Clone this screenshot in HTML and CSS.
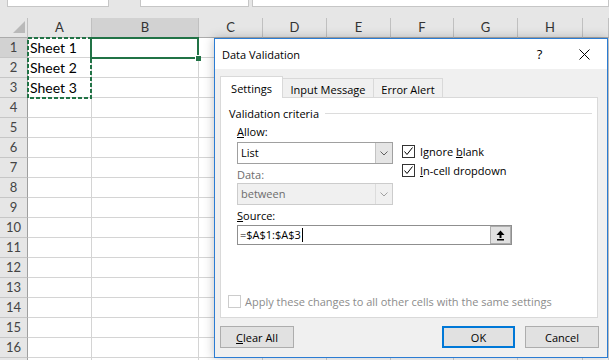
FILE: index.html
```html
<!DOCTYPE html>
<html>
<head>
    <title>Data Validation</title>
    <link rel="stylesheet" href="styles.css">
</head>
<body>
    <div class="toolbar">
        <div class="field name-box"></div>
        <div class="field formula-left"></div>
        <div class="field formula-bar"></div>
    </div>
    <div class="sheet">
        <div class="grid" id="grid">
            <div class="corner">
                <svg width="28" height="20" viewBox="0 0 28 20"><polygon points="25,3 25,15 13,15" fill="#b9b9b9"/></svg>
            </div>
            <div class="col-head">A</div>
            <div class="col-head selected">B</div>
            <div class="col-head">C</div>
            <div class="col-head">D</div>
            <div class="col-head">E</div>
            <div class="col-head">F</div>
            <div class="col-head">G</div>
            <div class="col-head">H</div>
            <div class="col-head"></div>
        </div>
        <!-- copy marquee round A1:A3 -->
        <svg class="marquee" width="65" height="62" viewBox="0 0 65 62">
            <rect x="1" y="1" width="63" height="60" fill="none" stroke="#217346" stroke-width="2" stroke-dasharray="4 2"/>
        </svg>
        <div class="active-cell"><span class="fill-handle"></span></div>
    </div>

    <div class="dialog">
        <div class="title-bar">
            <span class="title">Data Validation</span>
            <span class="title-btn help">?</span>
            <span class="title-btn">
                <svg width="11" height="11" viewBox="0 0 11 11"><path d="M0.5 0.5 L10.5 10.5 M10.5 0.5 L0.5 10.5" stroke="#000" stroke-width="1"/></svg>
            </span>
        </div>
        <div class="dialog-body">
            <div class="tabs">
                <div class="tab active tab-settings">Settings</div>
                <div class="tab tab-input">Input Message</div>
                <div class="tab tab-error">Error Alert</div>
            </div>
            <div class="pane">
                <div class="group-title">
                    <span>Validation criteria</span>
                    <span class="group-line"></span>
                </div>
                <div class="criteria">
                    <div class="criteria-left">
                        <div class="label"><u>A</u>llow:</div>
                        <div class="select">
                            <span class="select-text">List</span>
                            <span class="select-btn">
                                <svg width="8" height="5" viewBox="0 0 8 5"><polyline points="0.5,0.5 4,4 7.5,0.5" fill="none" stroke="#606060" stroke-width="1"/></svg>
                            </span>
                        </div>
                        <div class="label disabled">Data:</div>
                        <div class="select disabled">
                            <span class="select-text">between</span>
                            <span class="select-btn">
                                <svg width="8" height="5" viewBox="0 0 8 5"><polyline points="0.5,0.5 4,4 7.5,0.5" fill="none" stroke="#a0a0a0" stroke-width="1"/></svg>
                            </span>
                        </div>
                    </div>
                    <div class="criteria-right">
                        <div class="check-row">
                            <svg width="13" height="13" viewBox="0 0 13 13"><rect x="0.5" y="0.5" width="12" height="12" fill="#fff" stroke="#333"/><polyline points="2.5,6.5 5,9.5 10.5,2.5" fill="none" stroke="#000" stroke-width="1"/></svg>
                            <span>Ignore <u>b</u>lank</span>
                        </div>
                        <div class="check-row">
                            <svg width="13" height="13" viewBox="0 0 13 13"><rect x="0.5" y="0.5" width="12" height="12" fill="#fff" stroke="#333"/><polyline points="2.5,6.5 5,9.5 10.5,2.5" fill="none" stroke="#000" stroke-width="1"/></svg>
                            <span><u>I</u>n-cell dropdown</span>
                        </div>
                    </div>
                </div>
                <div class="label source-label"><u>S</u>ource:</div>
                <div class="source">
                    <span class="source-text">=$A$1:$A$3<span class="caret"></span></span>
                    <span class="source-btn">
                        <svg width="9" height="11" viewBox="0 0 9 11"><polygon points="4.5,0.5 8.5,5 0.5,5" fill="#000"/><rect x="3.5" y="4.5" width="2" height="3.5" fill="#000"/><rect x="1" y="9" width="7" height="1.5" fill="#000"/></svg>
                    </span>
                </div>
                <div class="apply-row">
                    <span class="apply-box"></span>
                    <span>Apply these changes to all other cells with the same settings</span>
                </div>
            </div>
            <div class="buttons">
                <div class="button"><u>C</u>lear All</div>
                <div class="spacer"></div>
                <div class="button default">OK</div>
                <div class="button">Cancel</div>
            </div>
        </div>
    </div>

  <script>
    var columns = 9;
    var values = { 1: "Sheet 1", 2: "Sheet 2", 3: "Sheet 3" };
    var grid = document.getElementById("grid");

    // 16 numbered rows, plus the top sliver of the next one
    for (var r = 1; r <= 17; r++) {
      var head = document.createElement("div");
      head.className = r === 1 ? "row-head selected" : "row-head";
      if (r <= 16) {
        head.textContent = r;
      }
      grid.appendChild(head);
      for (var c = 0; c < columns; c++) {
        var cell = document.createElement("div");
        cell.className = "cell";
        if (c === 0 && values[r]) {
          cell.textContent = values[r];
        }
        grid.appendChild(cell);
      }
    }
  </script>
</body>
</html>
```

FILE: styles.css
```css
body {
    margin: 0;
    width: 609px;
    height: 360px;
    overflow: hidden;
    background-color: #ffffff;
    font-family: Lato, "Open Sans", sans-serif;
}

/* formula bar strip */
.toolbar {
    height: 18px;
    background-color: #e6e6e6;
    display: flex;
    align-items: flex-start;
}
.field {
    height: 6px;
    background-color: #ffffff;
    border: 1px solid #c6c6c6;
    border-top: none;
}
.name-box {
    margin-left: 7px;
    width: 100px;
}
.formula-left {
    margin-left: 31px;
    width: 107px;
}
.formula-bar {
    margin-left: 3px;
    flex: 1;
}

/* sheet grid */
.sheet {
    position: relative;
}
.grid {
    display: grid;
    grid-template-columns: 28px 64px 107px 64px 64px 64px 63px 64px 65px 1fr;
    grid-auto-rows: 20px;
}
.grid > div {
    box-sizing: border-box;
    border-right: 1px solid #d4d4d4;
    border-bottom: 1px solid #d4d4d4;
}
.corner {
    background-color: #e6e6e6;
}
.corner svg {
    display: block;
}
.grid > .col-head,
.grid > .corner {
    border-right-color: #c0c0c0;
    border-bottom-color: #ababab;
}
.col-head {
    background-color: #e6e6e6;
    color: #333;
    font-size: 13px;
    text-align: center;
    line-height: 19px;
}
.grid > .row-head {
    background-color: #e6e6e6;
    border-right-color: #9f9f9f;
    border-bottom-color: #c6c6c6;
    color: #444;
    font-size: 13px;
    text-align: center;
    line-height: 19px;
}
.col-head.selected,
.row-head.selected {
    background-color: #d2d2d2;
}
.cell {
    font-size: 14px;
    line-height: 19px;
    padding-left: 2px;
    color: #000;
    white-space: nowrap;
}

.marquee {
    position: absolute;
    left: 27px;
    top: 19px;
}
.active-cell {
    position: absolute;
    left: 90px;
    top: 19px;
    width: 109px;
    height: 22px;
    box-sizing: border-box;
    border: 2px solid #217346;
}
.fill-handle {
    position: absolute;
    right: -4px;
    bottom: -4px;
    width: 5px;
    height: 5px;
    background-color: #217346;
    border-left: 1px solid #fff;
    border-top: 1px solid #fff;
}

/* dialog */
.dialog {
    position: absolute;
    left: 214px;
    top: 38px;
    width: 394px;
    height: 320px;
    box-sizing: border-box;
    border: 1px solid #2b7cd3;
    background-color: #f0f0f0;
    box-shadow: 0 0 10px rgba(0, 0, 0, 0.25);
    font-family: "Open Sans", sans-serif;
    font-size: 11px;
    color: #000;
    display: flex;
    flex-direction: column;
}
.title-bar {
    height: 30px;
    background-color: #ffffff;
    display: flex;
    align-items: center;
    padding-left: 7px;
}
.title {
    flex: 1;
    font-size: 11px;
}
.title-btn {
    width: 45px;
    height: 30px;
    display: flex;
    align-items: center;
    justify-content: center;
}
.help {
    font-size: 13px;
}
.dialog-body {
    flex: 1;
    padding: 7px 9px 0 5px;
    display: flex;
    flex-direction: column;
}

.tabs {
    height: 21px;
    display: flex;
    align-items: flex-end;
}
.tab {
    box-sizing: border-box;
    height: 19px;
    border: 1px solid #d9d9d9;
    border-bottom: none;
    background-color: #f0f0f0;
    margin-left: -1px;
    display: flex;
    justify-content: center;
    align-items: center;
    padding-top: 2px;
}
.tab.active {
    height: 22px;
    margin-left: 0;
    margin-bottom: -1px;
    background-color: #ffffff;
    position: relative;
    z-index: 1;
    padding-top: 2px;
}
.tab-settings {
    width: 63px;
}
.tab-input {
    width: 92px;
}
.tab-error {
    width: 70px;
}

.pane {
    height: 221px;
    box-sizing: border-box;
    border: 1px solid #d9d9d9;
    background-color: #ffffff;
    display: flex;
    flex-direction: column;
}
.group-title {
    margin-top: 8px;
    padding-left: 8px;
    line-height: 15px;
    display: flex;
    align-items: center;
}
.group-line {
    flex: 1;
    height: 1px;
    background-color: #dcdcdc;
    margin: 0 5px 0 6px;
}
.label {
    line-height: 15px;
}
.label.disabled {
    color: #6d6d6d;
}
.criteria {
    margin-top: 3px;
    padding-left: 16px;
    display: flex;
}
.criteria-left {
    width: 156px;
}
.criteria-right {
    margin-left: 9px;
    padding-top: 21px;
}
.check-row {
    height: 19px;
    display: flex;
    align-items: flex-start;
    gap: 5px;
    line-height: 13px;
}
.check-row svg {
    display: block;
}
.select {
    box-sizing: border-box;
    height: 22px;
    border: 1px solid #a0a0a0;
    background-color: #ffffff;
    display: flex;
    margin-top: 3px;
}
.select.disabled {
    margin-top: 1px;
    border-color: #cccccc;
    background-color: #f0f0f0;
    color: #6d6d6d;
}
.criteria-left .label.disabled {
    margin-top: 3px;
}
.select-text {
    flex: 1;
    padding-left: 3px;
    line-height: 20px;
}
.select-btn {
    width: 16px;
    background-color: #e5e5e5;
    border-left: 1px solid #c3c3c3;
    display: flex;
    align-items: center;
    justify-content: center;
}
.select.disabled .select-btn {
    background-color: #f0f0f0;
    border-left-color: #dcdcdc;
}
.source-label {
    margin-top: 3px;
    padding-left: 16px;
}
.source {
    margin: 2px 0 0 16px;
    width: 275px;
    height: 20px;
    box-sizing: border-box;
    border: 1px solid #8f8f8f;
    display: flex;
}
.source-text {
    flex: 1;
    padding-left: 2px;
    line-height: 18px;
    display: flex;
    align-items: center;
}
.caret {
    width: 1px;
    height: 14px;
    background-color: #000;
    margin-left: 1px;
}
.source-btn {
    width: 21px;
    box-sizing: border-box;
    border: 1px solid #adadad;
    background-color: #e1e1e1;
    display: flex;
    align-items: center;
    justify-content: center;
}
.apply-row {
    margin-top: auto;
    margin-bottom: 9px;
    padding-left: 7px;
    display: flex;
    align-items: center;
    gap: 4px;
    color: #8c8c8c;
    line-height: 13px;
}
.apply-box {
    width: 13px;
    height: 13px;
    box-sizing: border-box;
    border: 1px solid #cccccc;
    background-color: #ffffff;
}

.buttons {
    margin-top: 8px;
    margin-right: -1px;
    display: flex;
    gap: 10px;
}
.spacer {
    flex: 1;
}
.button {
    width: 74px;
    height: 22px;
    box-sizing: border-box;
    border: 1px solid #adadad;
    background-color: #e1e1e1;
    display: flex;
    align-items: center;
    justify-content: center;
}
.button.default {
    width: 73px;
    border: 2px solid #0078d7;
}
```
